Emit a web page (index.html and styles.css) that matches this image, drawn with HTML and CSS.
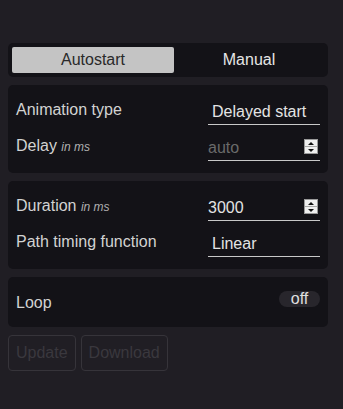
FILE: index.html
```html
<!DOCTYPE html>
<html lang="en">
<head>
  <meta charset="UTF-8">
  <meta name="viewport" content="width=device-width, initial-scale=1">
  <title>Animation settings</title>
  <link rel="stylesheet" href="styles.css">
</head>
<body>
  <div class="settings">
    <div class="panel tabs">
      <button class="tab active">Autostart</button>
      <button class="tab">Manual</button>
    </div>

    <div class="panel">
      <div class="row">
        <label>Animation type</label>
        <div class="field select">Delayed start</div>
      </div>
      <div class="row">
        <label>Delay <em>in ms</em></label>
        <div class="field number">
          <span class="placeholder">auto</span>
          <span class="spinner"><i class="up"></i><i class="down"></i></span>
        </div>
      </div>
    </div>

    <div class="panel">
      <div class="row">
        <label>Duration <em>in ms</em></label>
        <div class="field number">
          <span>3000</span>
          <span class="spinner"><i class="up"></i><i class="down"></i></span>
        </div>
      </div>
      <div class="row">
        <label>Path timing function</label>
        <div class="field select">Linear</div>
      </div>
    </div>

    <div class="panel">
      <div class="row loop">
        <label>Loop</label>
        <span class="switch">off</span>
      </div>
    </div>

    <div class="actions">
      <button class="btn" disabled>Update</button>
      <button class="btn" disabled>Download</button>
    </div>
  </div>
</body>
</html>
```

FILE: styles.css
```css
body {
  margin: 0;
  padding: 43px 0 20px 8px;
  background: #201e24;
  font-family: 'Liberation Sans', Arial, sans-serif;
  font-size: 16px;
  color: #d2d2d2;
}

.settings {
  width: 320px;
  display: flex;
  flex-direction: column;
  gap: 8px;
}

.panel {
  background: #131217;
  border-radius: 5px;
  padding: 12px 8px;
  display: flex;
  flex-direction: column;
  gap: 8px;
}

.tabs {
  flex-direction: row;
  gap: 0;
  padding: 4px;
}

.tab {
  height: 26px;
  border: none;
  border-radius: 2px;
  background: transparent;
  color: #e6e6e6;
  font-family: inherit;
  font-size: 16px;
  padding: 0;
  flex: 1;
}

.tab.active {
  flex: 0 0 162px;
  background: #c4c4c4;
  color: #2a2a2a;
}

.row {
  height: 28px;
  display: flex;
  align-items: center;
}

.row label {
  flex: 1;
  padding-bottom: 3px;
}

.row em {
  font-size: 12px;
  color: #b0b0b0;
}

.field {
  width: 112px;
  height: 27px;
  border-bottom: 1px solid #c8c8c8;
  display: flex;
  align-items: center;
  color: #e4e4e4;
  padding-top: 2px;
  box-sizing: border-box;
}

.select {
  padding-left: 4px;
}

.number {
  justify-content: space-between;
}

.placeholder {
  color: #6a6a6a;
}

.spinner {
  width: 14px;
  height: 15px;
  margin: 0 2px 2px 0;
  border: 1px solid #9a9a9a;
  background: #efefef;
  box-sizing: border-box;
  display: flex;
  flex-direction: column;
}

.spinner i {
  flex: 1;
  display: flex;
  align-items: center;
  justify-content: center;
}

.spinner .up {
  border-bottom: 1px solid #a8a8a8;
}

.spinner .up::after {
  content: "";
  border: 3px solid transparent;
  border-bottom: 3px solid #111;
  border-top: none;
}

.spinner .down::after {
  content: "";
  border: 3px solid transparent;
  border-top: 3px solid #111;
  border-bottom: none;
}

.loop {
  height: 26px;
}

.loop label {
  padding-bottom: 0;
  padding-top: 2px;
}

.switch {
  width: 41px;
  height: 16px;
  line-height: 16px;
  margin-bottom: 6px;
  border-radius: 8px;
  background: #28262c;
  color: #e0e0e0;
  text-align: center;
}

.actions {
  display: flex;
  gap: 5px;
}

.btn {
  height: 36px;
  padding: 0 7px;
  background: transparent;
  border: 1px solid #36343a;
  border-radius: 4px;
  color: #3a383e;
  font-family: inherit;
  font-size: 16px;
}
```
